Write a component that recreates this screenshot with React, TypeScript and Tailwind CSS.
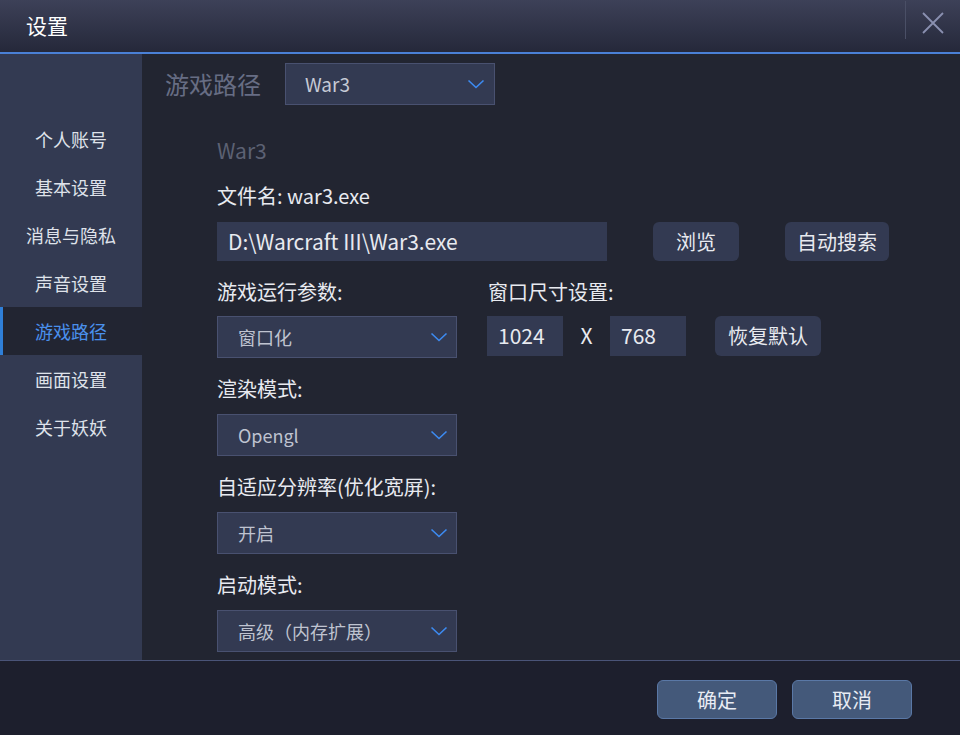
import React from "react";

const font = { fontFamily: '"Noto Sans CJK SC", "Noto Sans", sans-serif' };

const menu = ["个人账号", "基本设置", "消息与隐私", "声音设置", "游戏路径", "画面设置", "关于妖妖"];

const Chevron: React.FC = () => (
  <svg width="18" height="10" viewBox="0 0 18 10" fill="none">
    <path d="M1.5 1.5 L9 8.5 L16.5 1.5" stroke="#3d8bf2" strokeWidth="1.6" />
  </svg>
);

const Select: React.FC<{ value: string }> = ({ value }) => (
  <div className="flex h-[42px] w-[240px] items-center justify-between border border-[#495170] bg-[#333a52] pl-[20px] pr-[8px]">
    <span className="text-[18px] text-[#bfc3d0]">{value}</span>
    <Chevron />
  </div>
);

const Label: React.FC<{ children: React.ReactNode; className?: string }> = ({ children, className = "" }) => (
  <div className={`h-6 text-[20px] leading-6 text-[#e8eaf0] ${className}`}>{children}</div>
);

const App: React.FC = () => {
  return (
    <div className="flex h-[735px] w-[960px] flex-col overflow-hidden bg-[#222531]" style={font}>
      {/* title bar */}
      <div className="flex h-[54px] items-center justify-between border-b-2 border-[#4a80d6] bg-gradient-to-b from-[#3d4158] to-[#25283a]">
        <span className="pb-[1px] pl-[26px] text-[21px] text-white">设置</span>
        <div className="flex h-full items-center pb-[2px]">
          <div className="mb-[10px] h-[38px] w-px bg-[#4a4f66]" />
          <div className="flex w-[54px] items-center justify-center pb-[4px]">
            <svg width="24" height="24" viewBox="0 0 24 24" fill="none">
              <path d="M2 2 L22 22 M22 2 L2 22" stroke="#8a90b0" strokeWidth="1.8" />
            </svg>
          </div>
        </div>
      </div>

      <div className="flex flex-1">
        {/* sidebar */}
        <div className="w-[142px] bg-[#333a52] pt-[61px]">
          {menu.map((m) =>
            m === "游戏路径" ? (
              <div key={m} className="flex h-12 items-center justify-center border-l-[3px] border-[#2f7fd8] bg-[#222532] pr-[3px] text-[18px] text-[#4a90ec]">
                {m}
              </div>
            ) : (
              <div key={m} className="flex h-12 items-center justify-center text-[18px] text-[#dfe2ea]">
                {m}
              </div>
            )
          )}
        </div>

        {/* content */}
        <div className="flex-1">
          <div className="mt-[9px] flex items-center pl-[23px]">
            <span className="w-[120px] text-[24px] text-[#676d84]">游戏路径</span>
            <div className="flex h-[42px] w-[210px] items-center justify-between border border-[#495170] bg-[#333a52] pl-[19px] pr-[9px]">
              <span className="text-[19px] text-[#c6cad6]">War3</span>
              <Chevron />
            </div>
          </div>

          <div className="flex flex-col pl-[75px]">
            <div className="mt-[33px] h-6 text-[21px] leading-6 text-[#5c6173]">War3</div>
            <Label className="mt-[22px]">文件名: war3.exe</Label>

            <div className="mt-[14px] flex items-center">
              <div className="flex h-[39px] w-[390px] items-center bg-[#333a52] pl-[11px] text-[21px] text-[#e8eaf0]">
                D:\Warcraft III\War3.exe
              </div>
              <button className="ml-[46px] h-[39px] w-[86px] rounded-md bg-[#333a52] text-[20px] text-[#e8eaf0]">浏览</button>
              <button className="ml-[46px] h-[39px] w-[104px] rounded-md bg-[#333a52] text-[20px] text-[#e8eaf0]">自动搜索</button>
            </div>

            <div className="mt-[19px] flex">
              <Label className="w-[271px]">游戏运行参数:</Label>
              <Label>窗口尺寸设置:</Label>
            </div>

            <div className="mt-[12px] flex items-start">
              <Select value="窗口化" />
              <div className="ml-[30px] flex h-[40px] w-[76px] items-center bg-[#333a52] pl-[11px] text-[21px] text-[#e8eaf0]">1024</div>
              <span className="flex h-[40px] w-[47px] items-center justify-center text-[21px] text-[#e8eaf0]">X</span>
              <div className="flex h-[40px] w-[76px] items-center bg-[#333a52] pl-[11px] text-[21px] text-[#e8eaf0]">768</div>
              <button className="ml-[29px] h-[40px] w-[106px] rounded-md bg-[#333a52] text-[20px] text-[#e8eaf0]">恢复默认</button>
            </div>

            <Label className="mt-[19px]">渲染模式:</Label>
            <div className="mt-[13px]">
              <Select value="Opengl" />
            </div>

            <Label className="mt-[19px]">自适应分辨率(优化宽屏):</Label>
            <div className="mt-[13px]">
              <Select value="开启" />
            </div>

            <Label className="mt-[19px]">启动模式:</Label>
            <div className="mt-[13px]">
              <Select value="高级（内存扩展）" />
            </div>
          </div>
        </div>
      </div>

      {/* footer */}
      <div className="flex h-[75px] items-start justify-end gap-[15px] border-t border-[#4a5478] bg-[#1d1f2d] pr-[48px] pt-[19px]">
        <button className="h-[39px] w-[120px] rounded-md border border-[#5a78a6] bg-[#44597a] text-[20px] text-[#e8ecf4]">确定</button>
        <button className="h-[39px] w-[120px] rounded-md border border-[#5a78a6] bg-[#44597a] text-[20px] text-[#e8ecf4]">取消</button>
      </div>
    </div>
  );
};

export default App;
